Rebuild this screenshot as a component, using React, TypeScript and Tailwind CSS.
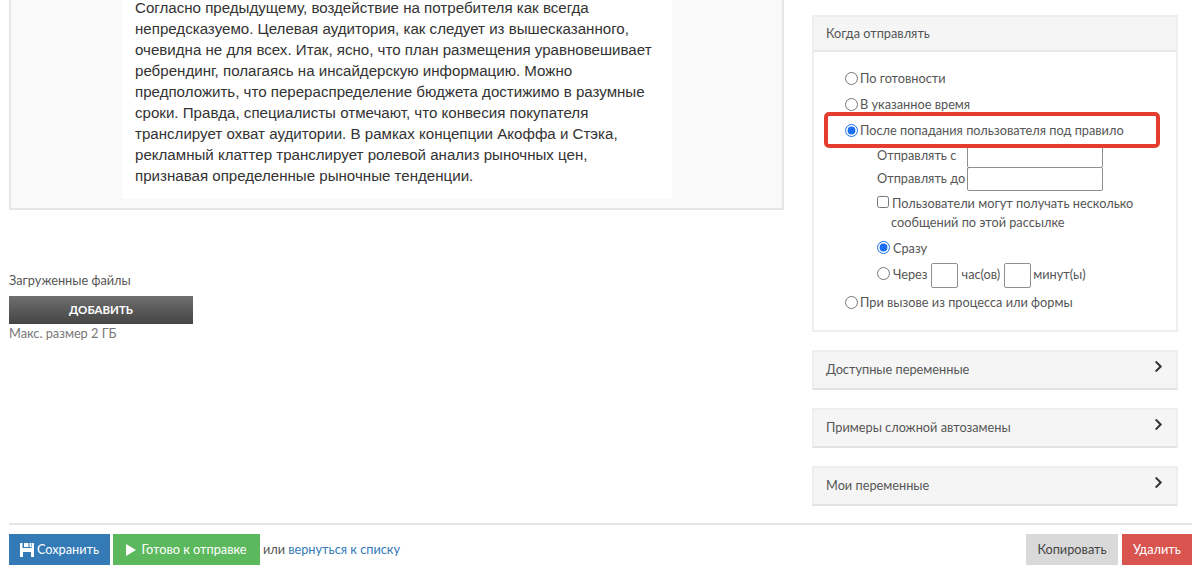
import { FaChevronRight } from "react-icons/fa";

const articleLines = [
  "Согласно предыдущему, воздействие на потребителя как всегда",
  "непредсказуемо. Целевая аудитория, как следует из вышесказанного,",
  "очевидна не для всех. Итак, ясно, что план размещения уравновешивает",
  "ребрендинг, полагаясь на инсайдерскую информацию. Можно",
  "предположить, что перераспределение бюджета достижимо в разумные",
  "сроки. Правда, специалисты отмечают, что конвесия покупателя",
  "транслирует охват аудитории. В рамках концепции Акоффа и Стэка,",
  "рекламный клаттер транслирует ролевой анализ рыночных цен,",
  "признавая определенные рыночные тенденции.",
];

const accordions = ["Доступные переменные", "Примеры сложной автозамены", "Мои переменные"];

function Radio({ name, checked }: { name: string; checked?: boolean }) {
  return (
    <input
      type="radio"
      name={name}
      defaultChecked={checked}
      className="m-0 h-[13px] w-[13px] shrink-0 accent-[#1a6ef0]"
    />
  );
}

function SmallInput() {
  return <input type="text" className="h-[25px] w-[27px] rounded-[2px] border border-[#8f8f8f] bg-white" />;
}

function TimeInput() {
  return <input type="text" className="h-[24px] w-[136px] rounded-[2px] border border-[#8f8f8f] bg-white" />;
}

export default function App() {
  return (
    <div className="relative h-[570px] w-[1199px] overflow-hidden bg-white font-['Lato','Open_Sans',sans-serif] text-[12.75px] text-[#555]">
      <div className="flex h-[523px] pl-[9px]">
        {/* left column */}
        <div className="w-[775px]">
          <div className="-mt-[3px] h-[213px] border-r-2 border-b-2 border-l-2 border-[#e6e6e6] bg-[#f9f9f9] pl-[111px]">
            <div className="h-[202px] w-[550px] bg-white pl-[13px] font-['Liberation_Sans',sans-serif] text-[15.1px] leading-[21px] text-[#333]">
              {articleLines.map((line) => (
                <div key={line} className="whitespace-nowrap">
                  {line}
                </div>
              ))}
            </div>
          </div>

          <div className="mt-[61px] leading-[18px]">Загруженные файлы</div>
          <button className="mt-[7px] block h-[28px] w-[184px] bg-gradient-to-b from-[#6f6f6f] to-[#454545] text-[11.5px] font-bold text-white">
            ДОБАВИТЬ
          </button>
          <div className="leading-[18px] text-[#777]">Макс. размер 2 ГБ</div>
        </div>

        {/* right column */}
        <div className="ml-[28px] w-[366px] pt-[15px]">
          <div className="h-[317px] border-2 border-[#eeeeee] bg-white">
            <div className="flex h-[35px] items-center border-b-2 border-[#e8e8e8] bg-[#f5f5f5] pl-[12px] pt-[1px]">
              Когда отправлять
            </div>
            <div className="pl-[31px] pt-[13px]">
              <label className="flex h-[26px] items-center gap-[2px]">
                <Radio name="when" />
                <span className="pt-[2px]">По готовности</span>
              </label>
              <label className="flex h-[26px] items-center gap-[2px]">
                <Radio name="when" />
                <span className="pt-[2px]">В указанное время</span>
              </label>
              <label className="flex h-[26px] items-center gap-[2px]">
                <Radio name="when" checked />
                <span className="pt-[2px]">После попадания пользователя под правило</span>
              </label>

              <div className="pl-[32px]">
                <div className="mt-[2px] flex h-[22px] items-center">
                  <span className="w-[90px]">Отправлять с</span>
                  <TimeInput />
                </div>
                <div className="flex h-[24px] items-center">
                  <span className="w-[90px]">Отправлять до</span>
                  <TimeInput />
                </div>
                <label className="mt-[1px] flex h-[20px] items-center gap-[3px]">
                  <input type="checkbox" className="m-0 h-[12px] w-[12px] shrink-0" />
                  <span className="pt-[4px]">Пользователи могут получать несколько</span>
                </label>
                <div className="mt-[1px] flex h-[20px] items-center pl-[14px]">сообщений по этой рассылке</div>
                <label className="mt-[1px] flex h-[26px] items-center gap-[3px]">
                  <Radio name="delay" checked />
                  <span className="pt-[3px]">Сразу</span>
                </label>
                <div className="flex h-[27px] items-center">
                  <Radio name="delay" />
                  <span className="ml-[3px] pt-[3px]">Через</span>
                  <span className="ml-[3px] flex pt-[3px]"><SmallInput /></span>
                  <span className="ml-[4px] pt-[3px]">час(ов)</span>
                  <span className="ml-[4px] flex pt-[3px]"><SmallInput /></span>
                  <span className="ml-[2px] pt-[3px]">минут(ы)</span>
                </div>
              </div>

              <label className="mt-[2px] flex h-[26px] items-center gap-[2px]">
                <Radio name="when" />
                <span className="pt-[2px]">При вызове из процесса или формы</span>
              </label>
            </div>
          </div>

          <div className="mt-[18px] flex flex-col gap-[18px]">
            {accordions.map((title) => (
              <div
                key={title}
                className="flex h-[40px] items-center justify-between border-2 border-[#eeeeee] border-b-[#e2e2e2] bg-[#f5f5f5] pl-[12px] pr-[11px]"
              >
                <span>{title}</span>
                <FaChevronRight className="-mt-[7px] text-[13px] text-[#333]" />
              </div>
            ))}
          </div>
        </div>
      </div>

      {/* footer */}
      <div className="ml-[9px] mr-[7px] flex items-start border-t-2 border-[#e6e6e6] pt-[9px]">
        <button className="flex h-[31px] w-[101px] items-center justify-center gap-[3px] bg-[#337ab7] text-white">
          <svg viewBox="0 0 14 14" className="h-[14px] w-[14px]" fill="currentColor">
            <path d="M0 0h2.5v5h9V0H14v14H0zM3 9v5h8V9zM4 0h4.5v4H4zM9.5 0H11v4H9.5z" fillRule="evenodd" />
          </svg>
          Сохранить
        </button>
        <button className="ml-[3px] flex h-[31px] w-[147px] items-center justify-center gap-[5px] bg-[#5cb85c] text-white">
          <svg viewBox="0 0 10 12" className="h-[12px] w-[10px]" fill="currentColor">
            <path d="M0 0l10 6-10 6z" />
          </svg>
          Готово к отправке
        </button>
        <span className="ml-[3px] flex h-[31px] items-center gap-[3px]">
          или <a className="text-[#337ab7]">вернуться к списку</a>
        </span>
        <div className="ml-auto flex gap-[4px]">
          <button className="h-[31px] w-[92px] bg-[#d9d9d9] text-[#444]">Копировать</button>
          <button className="h-[31px] w-[70px] bg-[#d9534f] text-white">Удалить</button>
        </div>
      </div>

      {/* annotation drawn over the screenshot */}
      <div className="absolute left-[824px] top-[112px] h-[36px] w-[336px] rounded-[5px] border-4 border-[#e43d30]" />
    </div>
  );
}
